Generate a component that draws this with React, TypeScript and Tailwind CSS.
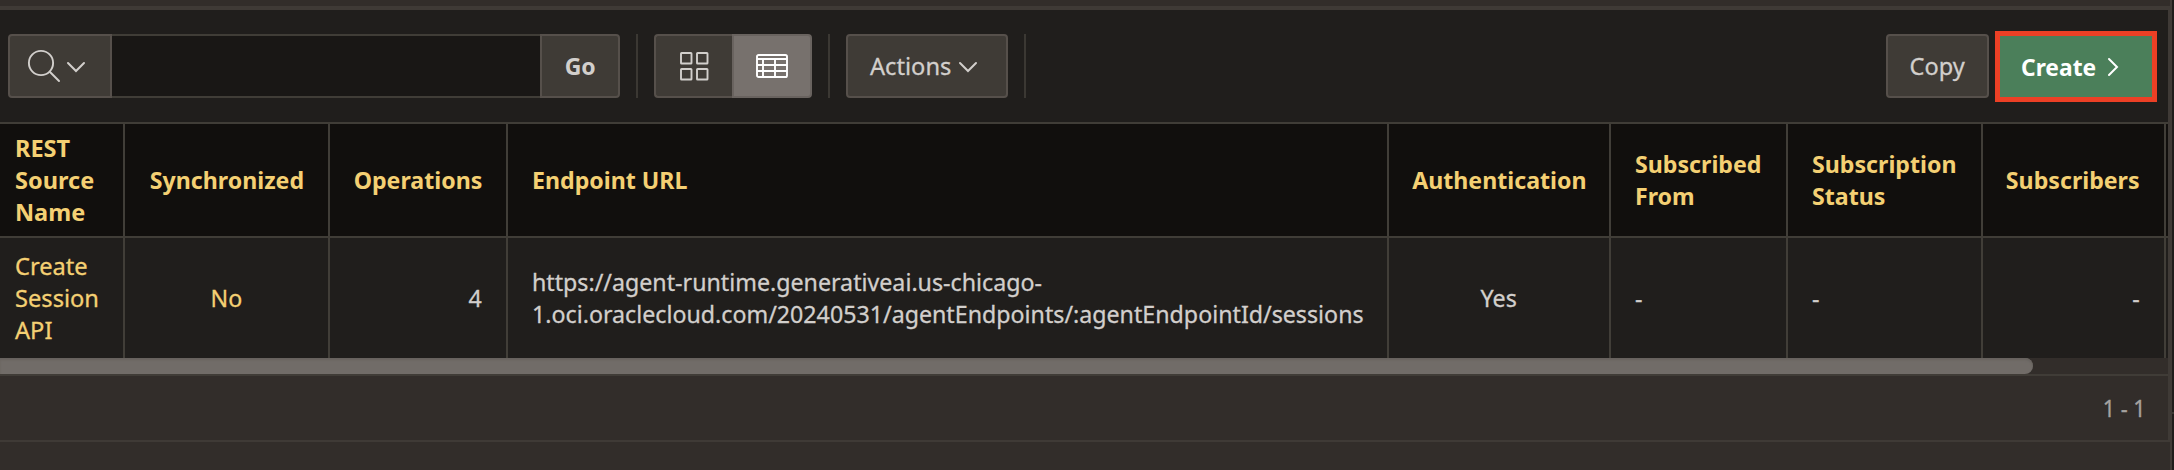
import type { ReactNode } from "react";
import clsx from "clsx";

type IconProps = { className?: string };

function SearchIcon({ className }: IconProps) {
  return (
    <svg className={className} width="34" height="34" viewBox="0 0 34 34" fill="none" stroke="currentColor" strokeWidth="1.9" strokeLinecap="round">
      <circle cx="15" cy="15" r="12.1" />
      <path d="M24 24L33 33" />
    </svg>
  );
}

function ChevronDown({ className }: IconProps) {
  return (
    <svg className={className} width="20" height="12" viewBox="0 0 20 12" fill="none" stroke="currentColor" strokeWidth="2" strokeLinecap="round">
      <path d="M2 2L10 10L18 2" />
    </svg>
  );
}

function ChevronRight({ className }: IconProps) {
  return (
    <svg className={className} width="12" height="20" viewBox="0 0 12 20" fill="none" stroke="currentColor" strokeWidth="2" strokeLinecap="round">
      <path d="M2 2L10 10L2 18" />
    </svg>
  );
}

function GridIcon() {
  return (
    <svg width="30" height="30" viewBox="0 0 30 30" fill="none" stroke="currentColor" strokeWidth="1.9">
      <rect x="2" y="2" width="10.5" height="10.5" rx="0.6" />
      <rect x="18" y="2" width="10.5" height="10.5" rx="0.6" />
      <rect x="2" y="18" width="10.5" height="10.5" rx="0.6" />
      <rect x="18" y="18" width="10.5" height="10.5" rx="0.6" />
    </svg>
  );
}

function TableIcon() {
  return (
    <svg width="32" height="24" viewBox="0 0 32 24" fill="none" stroke="currentColor" strokeWidth="1.9">
      <rect x="1" y="1" width="30" height="22" rx="1.6" />
      <path d="M1 5H31M1 11H31M1 17H31M7 5V23M19 5V23" />
    </svg>
  );
}

const align = {
  left: "justify-start text-left pl-6",
  center: "justify-center text-center",
  right: "justify-end text-right pr-6",
};
const origin = { left: "origin-left", center: "origin-center", right: "origin-right" };

type Align = keyof typeof align;

function Cell({ children, at, head }: { children: ReactNode; at: Align; head?: boolean }) {
  return (
    <div
      className={clsx(
        "flex items-center border-r-2 border-[#413e38] whitespace-pre",
        align[at],
        head ? "font-bold text-[#f4d073]" : "[-webkit-text-stroke:0.3px]",
      )}
    >
      <span className={clsx("inline-block", origin[at], head ? "scale-x-[0.965]" : "scale-x-[0.967]")}>{children}</span>
    </div>
  );
}

const columns = "grid grid-cols-[125px_205px_178px_881px_222px_177px_195px_183px_4px]";

export default function App() {
  return (
    <div className="flex h-[470px] w-[2174px] overflow-hidden bg-[#322d2a] font-['Noto_Sans',sans-serif] text-[24px] leading-[32px] text-[#d2cfcc]">
      <div className="flex w-[2170px] flex-col pt-[6px]">
        <section className="flex h-[436px] flex-col border-t-4 border-r-2 border-b-2 border-[#3f3a36] bg-[#201e1c]">
          <div className="flex h-[112px] shrink-0 items-center pl-2">
            <div className="flex h-16">
              <button className="flex w-[104px] rounded-l-[4px] border-2 border-[#56504b] bg-[#3f3b36] pt-[12px] pl-[16px]">
                <SearchIcon />
                <ChevronDown className="mt-[13px] ml-[6px]" />
              </button>
              <input className="w-[428px] border-y-2 border-[#403d37] bg-[#191715] outline-none" />
              <button className="w-20 rounded-r-[4px] border-2 border-[#56504b] bg-[#3f3b36] font-bold">
                <span className="inline-block scale-x-[0.96]">Go</span>
              </button>
            </div>
            <div className="ml-4 h-16 w-[2px] bg-[#3b3833]" />
            <div className="ml-4 flex h-16">
              <button className="flex w-[78px] items-center rounded-l-[4px] border-2 border-r-0 border-[#56504b] bg-[#3f3b36] pl-[23px]">
                <GridIcon />
              </button>
              <button className="flex w-20 items-center rounded-r-[4px] border-2 border-[#69635f] bg-[#77716d] pl-[22px] text-white">
                <TableIcon />
              </button>
            </div>
            <div className="ml-4 h-16 w-[2px] bg-[#3b3833]" />
            <button className="ml-4 flex h-16 w-[162px] items-center rounded-[4px] border-2 border-[#56504b] bg-[#3f3b36] pl-[22px]">
              <span className="inline-block w-[88px] origin-left scale-x-[0.985] text-left [-webkit-text-stroke:0.3px]">Actions</span>
              <ChevronDown className="mt-[2px]" />
            </button>
            <div className="ml-4 h-16 w-[2px] bg-[#3b3833]" />
            <button className="ml-auto h-16 w-[103px] rounded-[4px] border-2 border-[#56504b] bg-[#3f3b36]">
              <span className="inline-block scale-x-[0.98] [-webkit-text-stroke:0.3px]">Copy</span>
            </button>
            <button className="mt-[1px] mr-[11px] ml-[6px] flex h-[71px] w-[162px] items-center border-5 border-[#ec4025] bg-[#4b7f5a] pl-[21px] font-bold text-white">
              <span className="inline-block w-[86px] origin-left scale-x-[0.95] text-left">Create</span>
              <ChevronRight />
            </button>
          </div>

          <div className={clsx(columns, "h-[116px] shrink-0 border-y-2 border-[#403d37] bg-[#110f0d]")}>
            <div className="flex items-center border-r-2 border-[#413e38] pl-[15px] font-bold whitespace-pre text-[#f4d073]">
              <span className="inline-block origin-left scale-x-[0.98]">{"REST\nSource\nName"}</span>
            </div>
            <Cell head at="center">Synchronized</Cell>
            <Cell head at="right">Operations</Cell>
            <Cell head at="left">Endpoint URL</Cell>
            <Cell head at="center">Authentication</Cell>
            <Cell head at="left">{"Subscribed\nFrom"}</Cell>
            <Cell head at="left">{"Subscription\nStatus"}</Cell>
            <Cell head at="right">Subscribers</Cell>
            <div />
          </div>

          <div className={clsx(columns, "h-[120px] shrink-0")}>
            <div className="flex items-center border-r-2 border-[#413e38] pl-[15px] whitespace-pre text-[#f4d073] [-webkit-text-stroke:0.3px]">
              <a className="inline-block origin-left scale-x-[0.985]">{"Create\nSession\nAPI"}</a>
            </div>
            <Cell at="center">
              <a className="text-[#f4d073]">No</a>
            </Cell>
            <Cell at="right">4</Cell>
            <Cell at="left">
              {"https://agent-runtime.generativeai.us-chicago-\n1.oci.oraclecloud.com/20240531/agentEndpoints/:agentEndpointId/sessions"}
            </Cell>
            <Cell at="center">Yes</Cell>
            <Cell at="left">-</Cell>
            <Cell at="left">-</Cell>
            <Cell at="right">-</Cell>
            <div />
          </div>

          <div className="h-4 shrink-0 bg-[#322d2a]">
            <div className="h-4 w-[2033px] rounded-r-full bg-[#716c68] shadow-[inset_0_2px_2px_#67625e]" />
          </div>
          <footer className="flex flex-1 items-center justify-end border-t-2 border-[#403c37] bg-[#322d2a] pr-[22px] text-[#a5a29f]">
            <span className="inline-block origin-right scale-x-[0.9] [-webkit-text-stroke:0.3px]">1 - 1</span>
          </footer>
        </section>
      </div>
      <div className="w-[2px] bg-[#403b37]" />
      <div className="w-[2px] bg-[#1f1d1b] pt-[412px]">
        <div className="h-[2px] bg-[#3b3833]" />
      </div>
    </div>
  );
}
